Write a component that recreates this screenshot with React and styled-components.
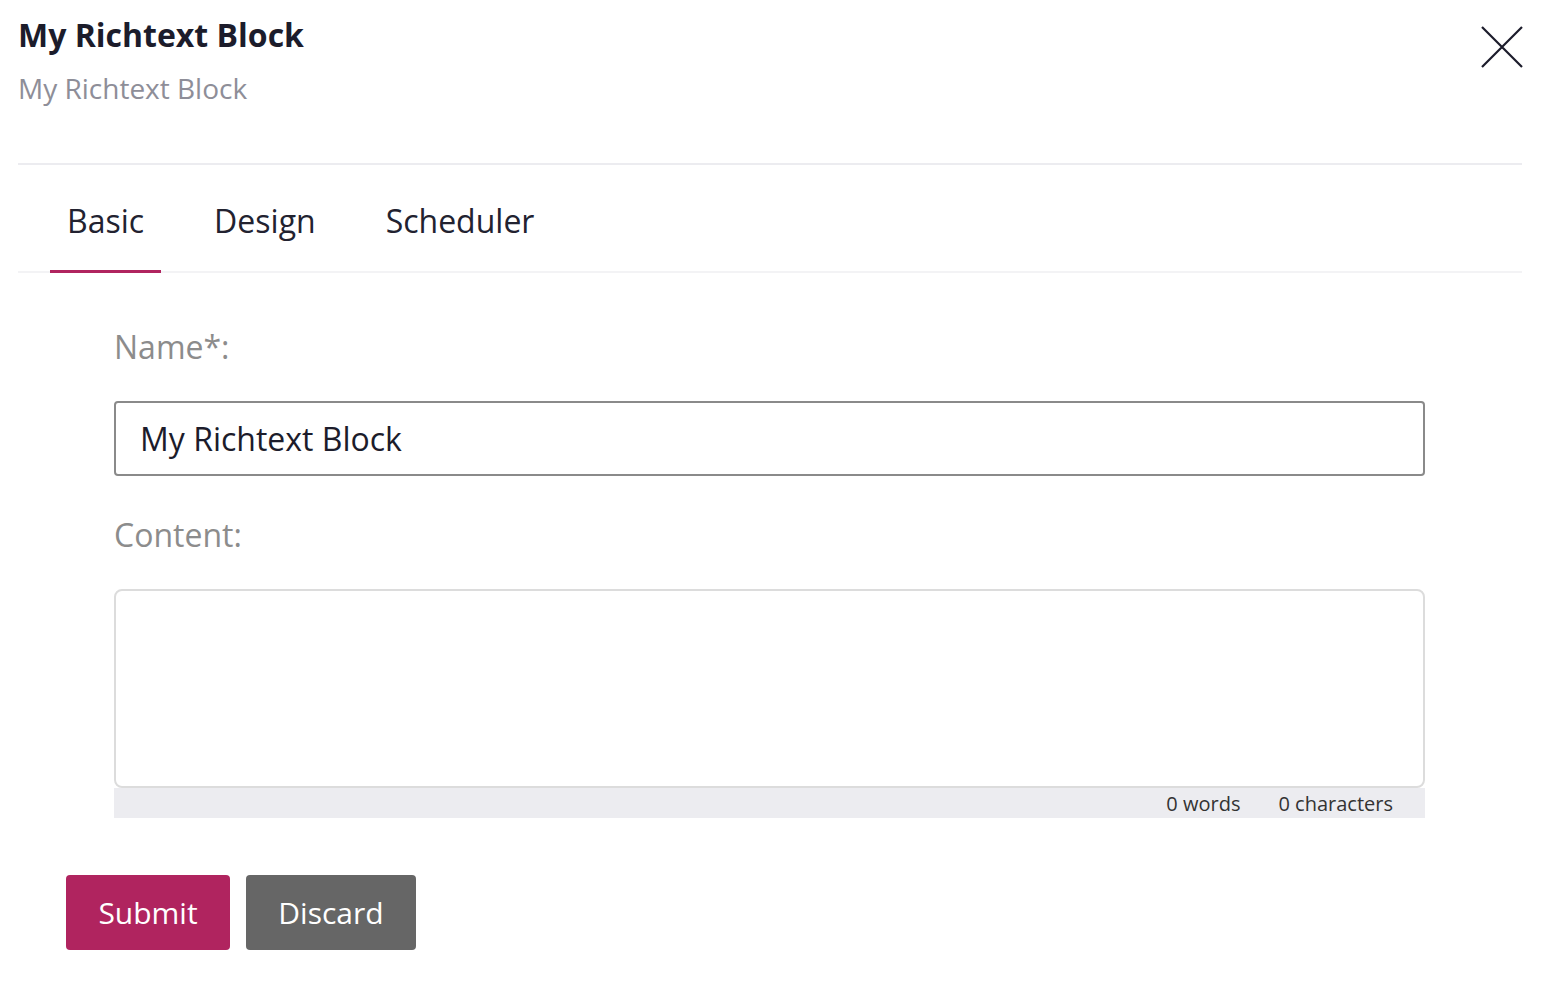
import React from "react";
import styled, { createGlobalStyle } from "styled-components";

const GlobalStyle = createGlobalStyle`
  body {
    margin: 0;
    background: #fff;
    font-family: "Open Sans", "Noto Sans", sans-serif;
  }
  * { box-sizing: border-box; }
`;

const Panel = styled.div`
  padding: 0 26px 0 18px;
`;

const Header = styled.div`
  display: flex;
  justify-content: space-between;
  align-items: flex-start;
  padding-top: 15px;
  padding-bottom: 57px;
  border-bottom: 2px solid #ececf0;
`;

const Title = styled.h1`
  margin: 0;
  font-size: 32px;
  line-height: 40px;
  font-weight: 700;
  color: #1c1c2b;
`;

const Subtitle = styled.div`
  margin-top: 15px;
  font-size: 28px;
  line-height: 36px;
  color: #8e8e98;
`;

const CloseButton = styled.button`
  border: 0;
  background: none;
  padding: 0;
  margin-top: 10px;
  margin-right: -2px;
  width: 44px;
  height: 44px;
  cursor: pointer;
  display: flex;
  align-items: center;
  justify-content: center;
`;

const TabBar = styled.div`
  display: flex;
  gap: 36px;
  padding-left: 32px;
  border-bottom: 2px solid #f3f3f5;
`;

const Tab = styled.div`
  padding: 36px 17px 29px;
  font-size: 32px;
  line-height: 40px;
  color: #222230;
  border-bottom: 3px solid ${(p) => (p.$active ? "#b0245f" : "transparent")};
  margin-bottom: -2px;
  cursor: pointer;
`;

const Form = styled.div`
  padding: 54px 97px 0 96px;
`;

const Label = styled.label`
  display: block;
  font-size: 32px;
  line-height: 40px;
  color: #8c8c8c;
  margin-bottom: ${(p) => p.$gap}px;
`;

const Input = styled.input`
  display: block;
  width: 100%;
  height: 75px;
  border: 2px solid #8a8a8a;
  border-radius: 4px;
  padding: 0 24px;
  font-family: inherit;
  font-size: 32px;
  color: #1c1c2b;
  margin-bottom: 39px;
  outline: none;
`;

const Editor = styled.div`
  height: 199px;
  border: 2px solid #dcdcdc;
  border-radius: 8px;
  background: #fff;
`;

const StatusBar = styled.div`
  display: flex;
  justify-content: flex-end;
  gap: 38px;
  height: 30px;
  align-items: center;
  padding-right: 32px;
  background: #ececf0;
  font-size: 20px;
  color: #333;
`;

const Actions = styled.div`
  display: flex;
  gap: 16px;
  padding: 57px 0 0 48px;
`;

const Button = styled.button`
  height: 75px;
  width: ${(p) => p.$width}px;
  border: 0;
  border-radius: 4px;
  background: ${(p) => p.$bg};
  color: #fff;
  font-family: inherit;
  font-size: 30px;
  cursor: pointer;
`;

export default function App() {
  return (
    <>
      <GlobalStyle />
      <Panel>
        <Header>
          <div>
            <Title>My Richtext Block</Title>
            <Subtitle>My Richtext Block</Subtitle>
          </div>
          <CloseButton aria-label="Close">
            <svg width="42" height="42" viewBox="0 0 42 42">
              <path d="M1 1L41 41M41 1L1 41" stroke="#1c1c2b" strokeWidth="2.2" />
            </svg>
          </CloseButton>
        </Header>
        <TabBar>
          <Tab $active>Basic</Tab>
          <Tab>Design</Tab>
          <Tab>Scheduler</Tab>
        </TabBar>
        <Form>
          <Label $gap={34}>Name*:</Label>
          <Input defaultValue="My Richtext Block" />
          <Label $gap={34}>Content:</Label>
          <Editor />
          <StatusBar>
            <span>0 words</span>
            <span>0 characters</span>
          </StatusBar>
        </Form>
        <Actions>
          <Button $bg="#b0245f" $width={164}>Submit</Button>
          <Button $bg="#666666" $width={170}>Discard</Button>
        </Actions>
      </Panel>
    </>
  );
}
